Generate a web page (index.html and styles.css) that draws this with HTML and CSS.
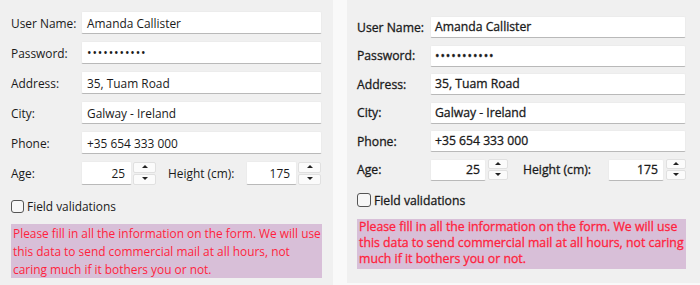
FILE: index.html
```html
<!DOCTYPE html>
<html lang="en">
<head>
    <meta charset="UTF-8">
    <title>Form styles</title>
    <link rel="stylesheet" href="styles.css">
</head>
<body>
    <div class="screen">
        <!-- left form -->
        <section class="panel p1">
            <div class="rows">
                <span class="lb">User Name:</span><div class="fld">Amanda Callister</div>
                <span class="lb">Password:</span><div class="fld pw">•••••••••••</div>
                <span class="lb">Address:</span><div class="fld">35, Tuam Road</div>
                <span class="lb">City:</span><div class="fld">Galway - Ireland</div>
                <span class="lb">Phone:</span><div class="fld">+35 654 333 000</div>
            </div>
            <div class="spinrow">
                <span class="lb">Age:</span>
                <div class="num">25</div>
                <div class="spin"><span class="up"></span><span class="dn"></span></div>
                <span class="lb2">Height (cm):</span>
                <div class="num">175</div>
                <div class="spin"><span class="up"></span><span class="dn"></span></div>
            </div>
            <div class="check"><span class="box"></span>Field validations</div>
            <p class="notice">Please fill in all the information on the form. We will use<br>this data to send commercial mail at all hours, not<br>caring much if it bothers you or not.</p>
        </section>

        <!-- right form -->
        <section class="panel p2">
            <div class="rows">
                <span class="lb">User Name:</span><div class="fld">Amanda Callister</div>
                <span class="lb">Password:</span><div class="fld pw">•••••••••••</div>
                <span class="lb">Address:</span><div class="fld">35, Tuam Road</div>
                <span class="lb">City:</span><div class="fld">Galway - Ireland</div>
                <span class="lb">Phone:</span><div class="fld">+35 654 333 000</div>
            </div>
            <div class="spinrow">
                <span class="lb">Age:</span>
                <div class="num">25</div>
                <div class="spin"><span class="up"></span><span class="dn"></span></div>
                <span class="lb2">Height (cm):</span>
                <div class="num">175</div>
                <div class="spin"><span class="up"></span><span class="dn"></span></div>
            </div>
            <div class="check"><span class="box"></span>Field validations</div>
            <p class="notice">Please fill in all the information on the form. We will use<br>this data to send commercial mail at all hours, not caring<br>much if it bothers you or not.</p>
        </section>
    </div>
</body>
</html>
```

FILE: styles.css
```css
body{
    margin: 0;
    background-color: #f9f9f9;
    font-family: "Open Sans", "Noto Sans", sans-serif;
    color: #1a1a1a;
}

.screen{
    display: flex;
    gap: 14px;
    width: 700px;
    height: 285px;
}

/* panel common */
.panel{
    background-color: #f0f0f0;
    box-sizing: border-box;
}

.p1{
    width: 333px;
    padding: 11px 11px 0 11px;
    font-size: 11.9px;
}

.p2{
    flex: 1;
    padding: 16px 14px 0 10px;
    font-size: 12.2px;
    height: 283px;
    /* heavier text on the right */
    -webkit-text-stroke: 0.3px currentColor;
}

/* label + field grid */
.rows{
    display: grid;
    grid-template-columns: 70px 1fr;
    row-gap: 7px;
    align-items: center;
}
.p2 .rows{
    grid-template-columns: 73px 1fr;
    row-gap: 6.5px;
}

.fld{
    height: 23px;
    line-height: 22px;
    box-sizing: border-box;
    padding-left: 5px;
    background-color: #fff;
    border: 1px solid #ececec;
    border-bottom-color: #b9b9b9;
    border-radius: 2px;
}
.p2 .fld{
    height: 22px;
    line-height: 20px;
    padding-left: 4px;
}

/* password dots */
.pw{
    letter-spacing: 0.9px;
    font-size: 12px;
}

/* spin box row */
.spinrow{
    display: flex;
    align-items: center;
    margin-top: 7px;
}
.p2 .spinrow{
    margin-top: 6.5px;
}

.spinrow .lb{
    width: 70px;
}
.p2 .spinrow .lb{
    width: 73px;
}

.num{
    width: 51px;
    height: 24px;
    line-height: 23px;
    box-sizing: border-box;
    text-align: right;
    padding-right: 6px;
    background-color: #fff;
    border: 1px solid #ececec;
    border-bottom-color: #b9b9b9;
    border-radius: 2px;
}
.p2 .num{
    width: 56px;
    height: 22px;
    line-height: 20px;
    padding-right: 5px;
}

.spin{
    display: flex;
    flex-direction: column;
    gap: 1px;
    width: 23px;
    margin-left: 1px;
}
.p2 .spin{
    width: 20px;
    margin-left: 2px;
}

.spin span{
    position: relative;
    height: 11px;
    box-sizing: border-box;
    background-color: #fbfbfb;
    border: 1px solid #e0e0e0;
    border-radius: 2px;
}
.p2 .spin span{
    height: 10px;
}

/* little triangles */
.spin span::after{
    content: "";
    position: absolute;
    left: 50%;
    top: 50%;
    margin-left: -3px;
    margin-top: -2px;
    border-left: 3px solid transparent;
    border-right: 3px solid transparent;
}
.spin .up::after{
    border-bottom: 3px solid #222;
}
.spin .dn::after{
    border-top: 3px solid #222;
}

.lb2{
    margin-left: 12px;
    width: 78px;
}
.p2 .lb2{
    margin-left: 15px;
    width: 85px;
}

/* checkbox */
.check{
    display: flex;
    align-items: center;
    gap: 3px;
    margin-top: 13px;
}
.p2 .check{
    margin-top: 11px;
}

.box{
    width: 11px;
    height: 11px;
    border: 1px solid #555;
    border-radius: 3px;
    background-color: #f7f7f7;
}
.p2 .box{
    width: 12px;
    height: 12px;
    -webkit-text-stroke: 0;
}

/* pink message */
.notice{
    margin: 10px 0 0;
    padding: 0 2px;
    background-color: #d8bfd8;
    color: #ff1f3d;
    line-height: 18px;
    font-size: 11.9px;
    white-space: nowrap;
}
.p2 .notice{
    margin-top: 10px;
    line-height: 16px;
    padding-bottom: 2px;
    font-size: 12.3px;
}
```
